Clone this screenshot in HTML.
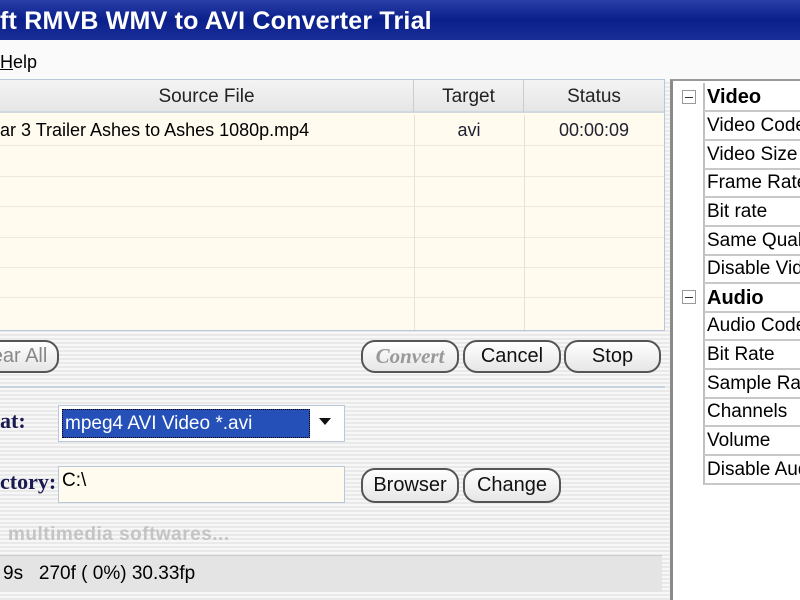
<!DOCTYPE html>
<html><head><meta charset="utf-8"><style>
*{margin:0;padding:0;box-sizing:border-box}
body{width:800px;height:600px;overflow:hidden;position:relative;font-family:"Liberation Sans",sans-serif;background:repeating-linear-gradient(#f7f7f7 0 2px,#e9e9e9 2px 4px);}
.a{position:absolute}
.title{left:0;top:0;width:800px;height:40px;background:linear-gradient(#2a3fa8,#0a1f8a 50%,#1a2e98);color:#fff;font-weight:bold;font-size:25px;line-height:42px;font-family:"Liberation Sans",sans-serif;padding-left:0;letter-spacing:0.2px}
.menu{left:0;top:40px;width:800px;height:40px;background:#fafafa;font-size:18px;line-height:44px}
.list{left:0;top:79px;width:665px;height:252px;background:#fffbee;border:1px solid #b8c8d8;border-left:none}
.hdr{left:0;top:0;width:664px;height:33px;background:linear-gradient(#f4f4f4,#e6e6e6);border-bottom:2px solid #d0d8e0;font-size:19px;color:#222}
.hdr div,.row div{position:absolute;text-align:center}
.row{position:absolute;left:0;width:664px;height:30.5px;border-bottom:1px solid #ece8dc;font-size:18px}
.btn{position:absolute;height:33px;border:2px solid #555;border-radius:14px;background:linear-gradient(#fff,#e6e6e6);font-size:20px;text-align:center;line-height:29px;color:#111}
.right{left:670px;top:79px;width:130px;height:521px;background:#fff;border-left:3px solid #8a8a8a;border-top:2px solid #999}
.ti{position:absolute;left:30px;width:100px;height:28.7px;border-bottom:2px solid #c8c8c8;border-left:2px solid #c0c0c0;font-size:19px;line-height:28px;padding-left:2px;white-space:nowrap;overflow:hidden}
.b{font-weight:bold;font-size:20px}
.plus{position:absolute;left:9px;width:14px;height:14px;border:1px solid #999;background:#fff}
.plus:after{content:"";position:absolute;left:2px;top:6px;width:8px;height:1px;background:#333}
</style></head><body>
<div class="a title">ft RMVB WMV to AVI Converter Trial</div>
<div class="a menu"><u>H</u>elp</div>
<div class="a list">
 <div class="a hdr"><div style="left:0;width:414px;line-height:33px;border-right:1px solid #ccc;height:33px">Source File</div><div style="left:414px;width:110px;line-height:33px;border-right:1px solid #ccc;height:33px">Target</div><div style="left:524px;width:140px;line-height:33px">Status</div></div>
 <div class="row" style="top:35px"><div style="left:0;width:414px;text-align:left;line-height:30px">ar 3 Trailer Ashes to Ashes 1080p.mp4</div><div style="left:414px;width:110px;line-height:30px;color:#223">avi</div><div style="left:524px;width:140px;line-height:30px;color:#223">00:00:09</div></div>
 <div class="row" style="top:66px"></div><div class="row" style="top:96px"></div><div class="row" style="top:127px"></div><div class="row" style="top:157px"></div><div class="row" style="top:187px"></div>
 <div class="a" style="left:414px;top:35px;width:1px;height:215px;background:#e6e2d6"></div>
 <div class="a" style="left:524px;top:35px;width:1px;height:215px;background:#e6e2d6"></div>
</div>
<div class="btn" style="left:-20px;top:340px;width:79px;color:#888">ear All</div>
<div class="btn" style="left:361px;top:340px;width:98px;color:#999;font-family:'Liberation Serif',serif;font-weight:bold;font-style:italic;font-size:21px">Convert</div>
<div class="btn" style="left:463px;top:340px;width:98px">Cancel</div>
<div class="btn" style="left:564px;top:340px;width:97px">Stop</div>
<div class="a" style="left:0;top:386px;width:665px;height:2px;background:#c8d4e0"></div>
<div class="a" style="left:0;top:408px;font-family:'Liberation Serif',serif;font-weight:bold;font-size:22px;color:#1a1a50">at:</div>
<div class="a" style="left:58px;top:405px;width:287px;height:37px;background:#fff;border:1px solid #b8c8d8"></div>
<div class="a" style="left:62px;top:409px;width:248px;height:29px;background:#2450b8;border:1px dotted #000;color:#fff;font-size:19px;line-height:28px;padding-left:2px">mpeg4 AVI Video *.avi</div>
<div class="a" style="left:319px;top:418px;width:0;height:0;border-left:6px solid transparent;border-right:6px solid transparent;border-top:7px solid #111"></div>
<div class="a" style="left:0;top:469px;font-family:'Liberation Serif',serif;font-weight:bold;font-size:22px;color:#1a1a50">ctory:</div>
<div class="a" style="left:58px;top:466px;width:287px;height:37px;background:#fffbee;border:1px solid #b8c8d8;font-size:19px;padding:3px 0 0 3px">C:\</div>
<div class="btn" style="left:361px;top:468px;width:98px;height:35px;line-height:31px">Browser</div>
<div class="btn" style="left:463px;top:468px;width:98px;height:35px;line-height:31px">Change</div>
<div class="a" style="left:8px;top:524px;font-size:19px;font-weight:bold;color:#c4c4c4;letter-spacing:0.5px">multimedia softwares...</div>
<div class="a" style="left:0;top:555px;width:662px;height:37px;background:#e4e4e4;border-top:1px solid #ccc;font-size:19px;line-height:36px;padding-left:3px">9s&nbsp;&nbsp;&nbsp;270f ( 0%) 30.33fp</div>
<div class="a right">
 <div class="plus" style="top:9px"></div>
 <div class="ti b" style="top:2px">Video</div>
 <div class="ti" style="top:31px">Video Codec</div>
 <div class="ti" style="top:60px">Video Size</div>
 <div class="ti" style="top:88px">Frame Rate</div>
 <div class="ti" style="top:117px">Bit rate</div>
 <div class="ti" style="top:146px">Same Quality</div>
 <div class="ti" style="top:174px">Disable Video</div>
 <div class="plus" style="top:209px"></div>
 <div class="ti b" style="top:203px">Audio</div>
 <div class="ti" style="top:231px">Audio Codec</div>
 <div class="ti" style="top:260px">Bit Rate</div>
 <div class="ti" style="top:289px">Sample Rate</div>
 <div class="ti" style="top:317px">Channels</div>
 <div class="ti" style="top:346px">Volume</div>
 <div class="ti" style="top:375px">Disable Audio</div>
</div>
</body></html>
